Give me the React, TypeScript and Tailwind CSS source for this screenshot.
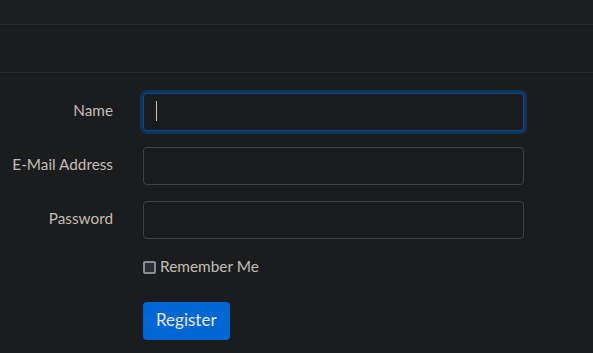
import React from 'react';

const font = { fontFamily: 'Lato, "Open Sans", sans-serif' };

export default function App() {
  return (
    <div className="w-[593px] h-[353px] overflow-hidden bg-[#1b1c1e] text-[#c3beb5]" style={font}>
      <div className="h-[25px] bg-[#1c1f20] border-b border-[#2c2c2f]" />
      <div className="h-[48px] border-b border-[#2c2c2f]" />
      <form className="pt-[20px] flex flex-col">
        <Field label="Name" focused />
        <Field label="E-Mail Address" />
        <Field label="Password" type="password" />
        <div className="flex items-center gap-[4px] ml-[143px] mt-[4px] h-[16px]">
          <span className="w-[13px] h-[13px] rounded-[2px] border-2 border-[#8a8b96] bg-[#2b2c36]" />
          <span className="text-[15.4px] leading-none pb-[1px]">Remember Me</span>
        </div>
        <div className="ml-[143px] mt-[27px]">
          <button
            type="button"
            className="h-[38px] px-[13px] rounded-[4px] bg-[#0066d3] text-[#e8e6e3] text-[17px] pb-[2px]"
          >
            Register
          </button>
        </div>
      </form>
    </div>
  );
}

function Field({ label, focused, type = 'text' }: { label: string; focused?: boolean; type?: string }) {
  return (
    <div className="flex items-center h-[38px] mb-[16px]">
      <label className="w-[113px] text-right text-[15.3px] pb-[3px]">{label}</label>
      <div className="relative ml-[30px] w-[381px] h-[38px]">
        <input
          type={type}
          className={
            focused
              ? 'w-full h-full rounded-[4px] bg-[#1a1b1d] border border-[#0b4a94] shadow-[0_0_0_3px_#14335a] outline-none px-[12px]'
              : 'w-full h-full rounded-[4px] bg-[#1a1b1d] border border-[#3f4145] outline-none px-[12px]'
          }
        />
        {focused && <span className="absolute left-[13px] top-[8px] w-px h-[20px] bg-[#c9c4bb]" />}
      </div>
    </div>
  );
}
